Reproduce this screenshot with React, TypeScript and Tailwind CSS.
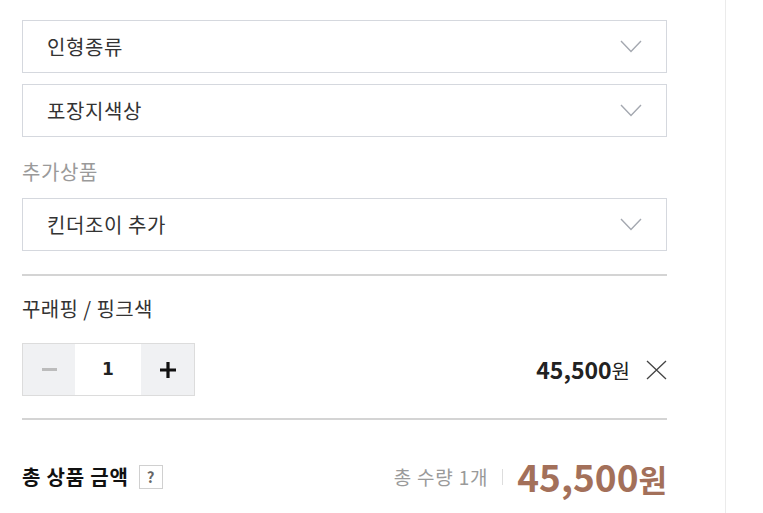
const font = { fontFamily: '"Malgun Gothic", "Noto Sans CJK KR", "Noto Sans", sans-serif' };

function Chevron() {
  return (
    <svg width="22" height="13" viewBox="0 0 22 13" fill="none" stroke="#a4a8b0" strokeWidth="1.4">
      <path d="M1 1l10 10.5L21 1" />
    </svg>
  );
}

function SelectBox({ label }: { label: string }) {
  return (
    <div className="h-[53px] border border-[#d5d8de] bg-white flex items-center justify-between pl-[24px] pr-[24px]">
      <span className="text-[20px] tracking-[0.6px] text-[#333]">{label}</span>
      <Chevron />
    </div>
  );
}

export default function App() {
  return (
    <div className="w-[763px] h-[513px] bg-white flex overflow-hidden" style={font}>
      <div className="w-[725px] pl-[22px] pr-[58px] pt-[20px]">
        <div className="flex flex-col gap-[11px]">
          <SelectBox label="인형종류" />
          <SelectBox label="포장지색상" />
        </div>
        <p className="mt-[21px] text-[20px] tracking-[0.6px] text-[#9a9a9a] leading-[28px]">추가상품</p>
        <div className="mt-[12px]">
          <SelectBox label="킨더조이 추가" />
        </div>
        <div className="mt-[23px] border-t-2 border-[#d4d4d4]" />
        <p className="mt-[19px] text-[20px] tracking-[0.4px] text-[#333] leading-[28px]">꾸래핑 / 핑크색</p>
        <div className="mt-[20px] flex items-center justify-between">
          <div className="flex h-[53px] border border-[#dcdcdc]">
            <button className="w-[52px] bg-[#f0f1f3] flex items-center justify-center">
              <span className="block w-[15px] h-[3px] bg-[#bcbcbc]" />
            </button>
            <div className="w-[66px] bg-white flex items-center justify-center text-[17px] font-bold text-[#222]" style={{ fontFamily: '"DejaVu Sans", sans-serif' }}>1</div>
            <button className="w-[53px] bg-[#f0f1f3] flex items-center justify-center">
              <svg width="16" height="16" viewBox="0 0 16 16" fill="none" stroke="#111" strokeWidth="3.2">
                <path d="M0 8h16M8 0v16" />
              </svg>
            </button>
          </div>
          <div className="flex items-center gap-[16px]">
            <span className="text-[#222] flex items-baseline">
              <span className="text-[23px] font-bold">45,500</span>
              <span className="text-[20px]">원</span>
            </span>
            <svg width="21" height="20" viewBox="0 0 21 20" fill="none" stroke="#444" strokeWidth="1.3">
              <path d="M1 1l19 18M20 1L1 19" />
            </svg>
          </div>
        </div>
        <div className="mt-[22px] border-t-2 border-[#d4d4d4]" />
        <div className="mt-[29px] flex items-center justify-between">
          <div className="flex items-center gap-[10px]">
            <span className="text-[20px] tracking-[0.8px] font-bold text-[#111]">총 상품 금액</span>
            <span className="w-[24px] h-[24px] border border-[#d0d0d0] flex items-center justify-center text-[15px] font-bold text-[#666]">?</span>
          </div>
          <div className="flex items-center">
            <span className="text-[19px] tracking-[0.8px] text-[#9a9a9a]">총 수량 1개</span>
            <span className="mx-[14px] w-px h-[16px] bg-[#ddd]" />
            <span className="text-[#a3705a] font-bold flex items-baseline">
              <span className="text-[37px]">45,500</span>
              <span className="text-[31px]">원</span>
            </span>
          </div>
        </div>
      </div>
      <div className="w-px h-full bg-[#ebebeb]" />
    </div>
  );
}
